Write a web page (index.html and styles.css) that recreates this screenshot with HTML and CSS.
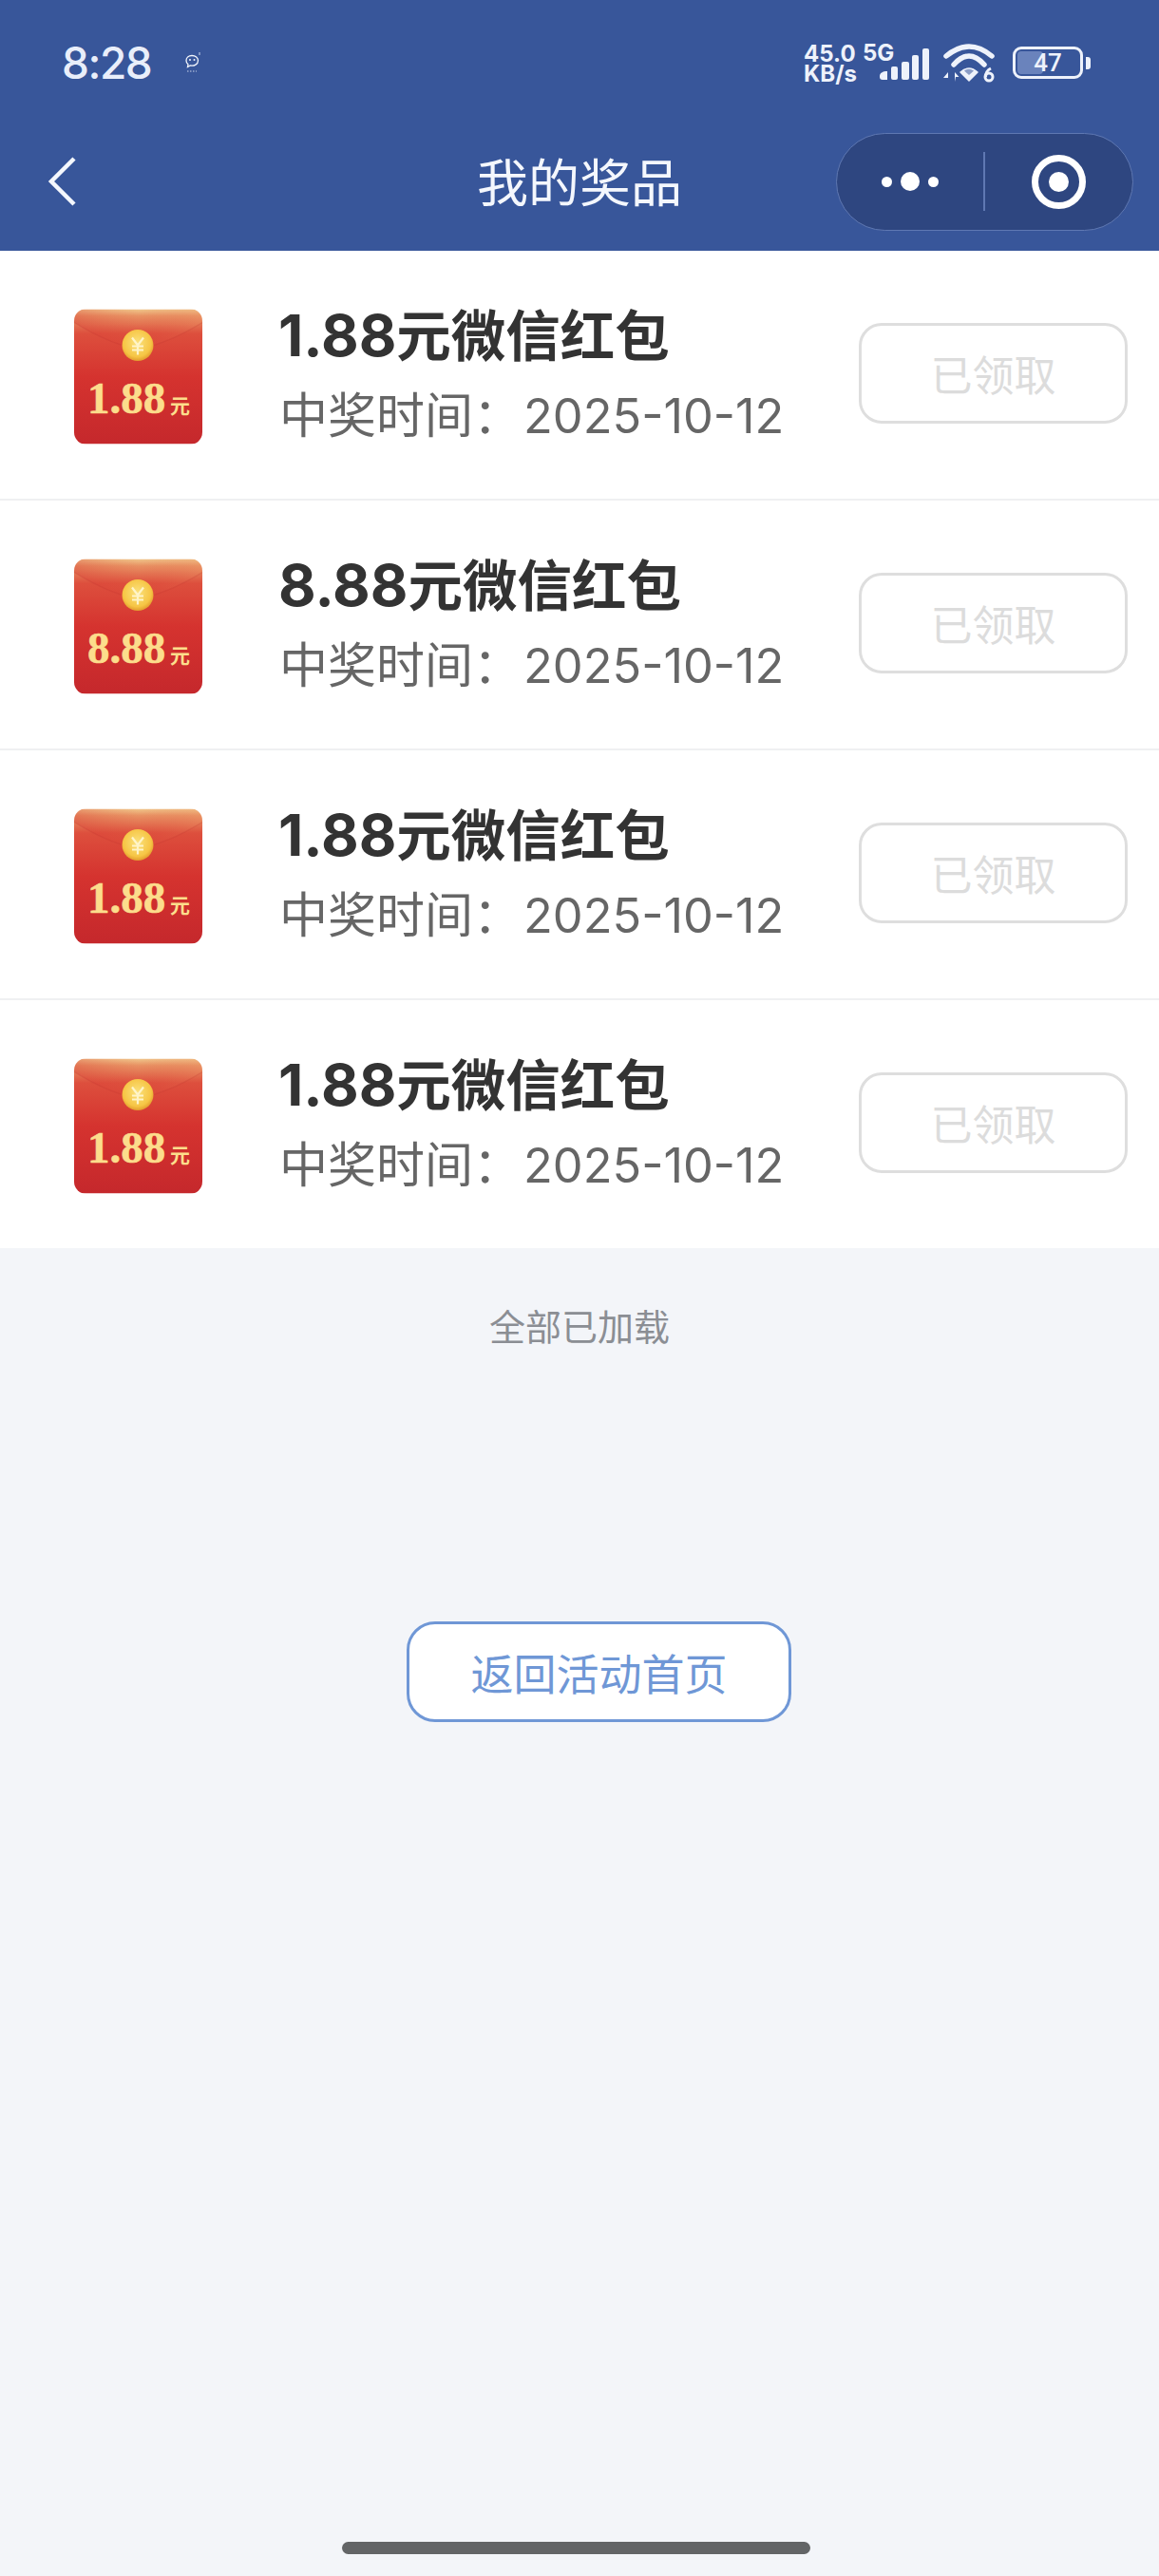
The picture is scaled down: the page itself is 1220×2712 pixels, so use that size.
FILE: index.html
```html
<!DOCTYPE html>
<html lang="zh-CN">
<head>
<meta charset="utf-8">
<title>我的奖品</title>
<link rel="stylesheet" href="styles.css">
</head>
<body>
<svg class="defs" width="0" height="0" aria-hidden="true">
  <defs>
    <linearGradient id="pk" x1="0" y1="0" x2="0" y2="1">
      <stop offset="0" stop-color="#f0c88c"/>
      <stop offset=".05" stop-color="#e89263"/>
      <stop offset=".18" stop-color="#dd4f3d"/>
      <stop offset=".5" stop-color="#d5332f"/>
      <stop offset="1" stop-color="#c5282c"/>
    </linearGradient>
    <linearGradient id="flap" x1="0" y1="0" x2="1" y2="0">
      <stop offset="0" stop-color="#d5312f" stop-opacity=".3"/>
      <stop offset=".5" stop-color="#e0483a" stop-opacity="0"/>
      <stop offset="1" stop-color="#ef9464" stop-opacity=".25"/>
    </linearGradient>
    <radialGradient id="coin" cx=".48" cy=".42" r=".62">
      <stop offset="0" stop-color="#fbe27e"/>
      <stop offset=".72" stop-color="#f6c544"/>
      <stop offset="1" stop-color="#dc8f27"/>
    </radialGradient>
    <symbol id="packet-art" viewBox="0 0 135 142">
      <rect width="135" height="142" fill="url(#pk)"/>
      <path d="M0 0H135V14C112 28 90 38 67 42C45 38 23 28 0 14Z" fill="url(#flap)"/>
      <path d="M0 14C23 28 45 38 67 42C90 38 112 28 135 14" fill="none" stroke="#b92a2a" stroke-opacity=".18" stroke-width="1.200"/>
      <circle cx="67" cy="38" r="16.500" fill="url(#coin)"/>
      <path d="M61 30L67 38L73 30M67 38V48M61 39H73M61 43H73" fill="none" stroke="#fff4c8" stroke-width="2.200"/>
    </symbol>
  </defs>
</svg>

<div class="app">
  <header class="header">
    <div class="status">
      <div class="status-left">
        <span class="clock">8:28</span>
        <svg class="wechat" width="22" height="24" viewBox="0 0 22 24">
          <path d="M9 4.500C5.500 4.500 3 6.800 3 9.800C3 11.500 3.800 12.800 5 13.800L4.500 16.500L7.300 15C11.500 15.800 15.500 13.500 15.500 9.800C15.500 6.800 12.800 4.500 9 4.500Z" fill="none" stroke="#f2f5fc" stroke-width="1.300"/>
          <circle cx="7" cy="9" r="1" fill="#f2f5fc"/><circle cx="11.500" cy="9" r="1" fill="#f2f5fc"/>
          <path d="M17 1V4" stroke="#c9d3ea" stroke-width="1"/>
          <path d="M4 21H14" stroke="#c9d3ea" stroke-width="1.200" stroke-dasharray="1.500 1.500"/>
        </svg>
      </div>
      <div class="status-right">
        <div class="speed">45.0<br>KB/s</div>
        <div class="signal">
          <span class="net">5G</span>
          <svg class="bars" width="52" height="33" viewBox="0 0 52 33">
            <g fill="#eef2fb">
              <path d="M0 29C0 26 3 24 8 24V33H3C1 33 0 32 0 30Z"/>
              <rect x="12" y="19" width="7" height="14" rx="2"/>
              <rect x="23" y="14" width="8" height="19" rx="2"/>
              <rect x="34" y="7" width="7" height="26" rx="2"/>
              <rect x="45" y="0" width="7" height="33" rx="2"/>
            </g>
          </svg>
        </div>
        <svg class="wifi" width="54" height="42" viewBox="0 0 54 42">
          <g fill="none" stroke="#eef2fb" stroke-width="5.500" stroke-linecap="round">
            <path d="M3 14Q27 -6 51 14"/>
            <path d="M11 23Q27 5 43 23"/>
          </g>
          <path d="M27 40L18 31Q27 23 36 31Z" fill="#eef2fb" stroke="#eef2fb" stroke-width="1.500" stroke-linejoin="round"/>
          <path d="M27 34L22 29.500Q27 26 32 29.500Z" fill="#38569a" opacity=".55"/>
          <path d="M5 41V31L0 37H5ZM12 41V31L16.500 36H13" fill="#eef2fb"/>
          <circle cx="48" cy="36" r="4" fill="none" stroke="#eef2fb" stroke-width="3"/>
          <path d="M44.500 36C44.500 31 46 29 50 27" fill="none" stroke="#eef2fb" stroke-width="3"/>
        </svg>
        <div class="battery">
          <div class="battery-body">
            <span class="battery-fill"></span>
            <span class="battery-num">47</span>
          </div>
          <span class="battery-nub"></span>
        </div>
      </div>
    </div>
    <nav class="nav">
      <svg class="back" width="32" height="54" viewBox="0 0 32 54">
        <path d="M28 3L4 27L28 51" fill="none" stroke="#f4f7fd" stroke-width="4.500"/>
      </svg>
      <h1 class="title">我的奖品</h1>
      <div class="capsule">
        <div class="capsule-dots">
          <span class="dot"></span><span class="dot dot-big"></span><span class="dot"></span>
        </div>
        <span class="capsule-sep"></span>
        <div class="capsule-target">
          <span class="target-ring"><span class="target-core"></span></span>
        </div>
      </div>
    </nav>
  </header>

  <main>
    <ul class="list">
      <li class="row">
        <div class="packet">
          <svg class="packet-art" viewBox="0 0 135 142"><use href="#packet-art"/></svg>
          <div class="packet-text"><span class="packet-amount">1.88</span><span class="packet-unit">元</span></div>
        </div>
        <div class="info">
          <div class="name"><span class="num">1.88</span>元微信红包</div>
          <div class="time">中奖时间：<span class="date">2025-10-12</span></div>
        </div>
        <button class="claim">已领取</button>
      </li>
      <li class="row">
        <div class="packet">
          <svg class="packet-art" viewBox="0 0 135 142"><use href="#packet-art"/></svg>
          <div class="packet-text"><span class="packet-amount">8.88</span><span class="packet-unit">元</span></div>
        </div>
        <div class="info">
          <div class="name"><span class="num">8.88</span>元微信红包</div>
          <div class="time">中奖时间：<span class="date">2025-10-12</span></div>
        </div>
        <button class="claim">已领取</button>
      </li>
      <li class="row">
        <div class="packet">
          <svg class="packet-art" viewBox="0 0 135 142"><use href="#packet-art"/></svg>
          <div class="packet-text"><span class="packet-amount">1.88</span><span class="packet-unit">元</span></div>
        </div>
        <div class="info">
          <div class="name"><span class="num">1.88</span>元微信红包</div>
          <div class="time">中奖时间：<span class="date">2025-10-12</span></div>
        </div>
        <button class="claim">已领取</button>
      </li>
      <li class="row row-last">
        <div class="packet">
          <svg class="packet-art" viewBox="0 0 135 142"><use href="#packet-art"/></svg>
          <div class="packet-text"><span class="packet-amount">1.88</span><span class="packet-unit">元</span></div>
        </div>
        <div class="info">
          <div class="name"><span class="num">1.88</span>元微信红包</div>
          <div class="time">中奖时间：<span class="date">2025-10-12</span></div>
        </div>
        <button class="claim">已领取</button>
      </li>
    </ul>
    <p class="loaded">全部已加载</p>
    <div class="home-wrap"><button class="home-btn">返回活动首页</button></div>
  </main>
  <div class="home-indicator"></div>
</div>
</body>
</html>
```

FILE: styles.css
```css
* { box-sizing: border-box; }
html, body { margin: 0; padding: 0; }
body {
  background: #f3f5f9;
  font-family: "Noto Sans CJK SC", "Noto Sans", sans-serif;
}
.defs { position: absolute; }
.app { position: relative; height: 2712px; overflow: hidden; }

.header { height: 264px; background: #38569a; }

.status {
  height: 132px;
  padding: 0 72px 0 65px;
  display: flex;
  justify-content: space-between;
  align-items: center;
  color: #eef2fb;
}
.status-left { display: flex; align-items: center; }
.clock {
  font-family: Inter, sans-serif;
  font-size: 46px;
  font-weight: 500;
  letter-spacing: -1.500px;
  line-height: 1;
  color: #e9eefa;
}
.wechat { margin-left: 34px; }
.status-right { display: flex; align-items: center; }
.speed {
  font-family: Inter, sans-serif;
  font-size: 24px;
  font-weight: 700;
  line-height: 21px;
  margin: 2px 6px 0 0;
}
.signal { position: relative; width: 70px; height: 44px; }
.net {
  position: absolute;
  left: 0;
  top: 0;
  font-family: Inter, sans-serif;
  font-size: 24px;
  font-weight: 700;
  line-height: 24px;
}
.bars { position: absolute; right: 0; bottom: 4px; }
.wifi { margin-left: 15px; }
.battery { display: flex; align-items: center; margin-left: 19px; }
.battery-body {
  position: relative;
  width: 74px;
  height: 34px;
  border: 3px solid #eef2fb;
  border-radius: 9px;
  display: flex;
  align-items: center;
  justify-content: center;
}
.battery-fill {
  position: absolute;
  left: 2px;
  top: 2px;
  bottom: 2px;
  width: 27px;
  background: #6a83bc;
  border-radius: 4px;
}
.battery-num {
  position: relative;
  font-family: Roboto, sans-serif;
  font-size: 26px;
  font-weight: 500;
  line-height: 1;
}
.battery-nub {
  width: 5px;
  height: 13px;
  margin-left: 3px;
  background: #eef2fb;
  border-radius: 0 3px 3px 0;
}

.nav {
  position: relative;
  height: 118px;
  padding: 0 27px 0 50px;
  display: flex;
  align-items: center;
  justify-content: space-between;
}
.title {
  position: absolute;
  left: 0;
  right: 0;
  top: 0;
  height: 116px;
  margin: 0;
  text-align: center;
  font-size: 54px;
  font-weight: 400;
  line-height: 116px;
  color: #f4f7fd;
  pointer-events: none;
}
.capsule {
  width: 313px;
  height: 103px;
  border: 1.500px solid #5f78b2;
  border-radius: 52px;
  background: #2e4680;
  display: flex;
  align-items: center;
}
.capsule-dots {
  width: 154px;
  display: flex;
  align-items: center;
  justify-content: center;
  gap: 9px;
}
.dot { width: 11px; height: 11px; border-radius: 50%; background: #fff; }
.dot-big { width: 20px; height: 20px; }
.capsule-sep { width: 2px; height: 62px; background: #5f78b2; }
.capsule-target {
  flex: 1;
  display: flex;
  justify-content: center;
}
.target-ring {
  width: 57px;
  height: 57px;
  border: 7px solid #fff;
  border-radius: 50%;
  display: flex;
  align-items: center;
  justify-content: center;
}
.target-core { width: 21px; height: 21px; border-radius: 50%; background: #fff; }

.list { margin: 0; padding: 0; list-style: none; background: #fff; }
.row {
  height: 263px;
  padding: 0 33px 0 78px;
  display: flex;
  align-items: center;
  border-bottom: 2px solid #eff0f2;
}
.row-last { height: 261px; border-bottom: 0; }
.packet {
  position: relative;
  width: 135px;
  height: 143px;
  flex: none;
  margin-top: 3px;
  border-radius: 13px;
  overflow: hidden;
}
.packet-art { position: absolute; inset: 0; width: 100%; height: 100%; }
.packet-text {
  position: absolute;
  left: 14px;
  right: 13px;
  bottom: 25px;
  display: flex;
  align-items: baseline;
  justify-content: space-between;
  color: #fcdd8c;
  font-weight: 700;
}
.packet-amount {
  font-family: "Liberation Serif", serif;
  font-size: 47px;
  line-height: 1;
  -webkit-text-stroke: 0.6px #fcdd8c;
}
.packet-unit { font-size: 21px; line-height: 1; }

.info { flex: 1; margin-left: 80px; padding-bottom: 1px; min-width: 0; }
.name {
  font-size: 57.500px;
  font-weight: 700;
  line-height: 68px;
  color: #333;
  white-space: nowrap;
}
.num { font-family: Inter, sans-serif; font-size: 61px; }
.time {
  margin-top: 13px;
  padding-left: 1px;
  font-size: 51px;
  line-height: 68px;
  color: #666;
  white-space: nowrap;
}
.date { font-family: Inter, sans-serif; font-size: 50.500px; margin-left: 2px; }
.claim {
  width: 283px;
  height: 106px;
  flex: none;
  margin-bottom: 3px;
  border: 3px solid #dedede;
  border-radius: 24px;
  background: #fff;
  font-family: inherit;
  font-size: 44px;
  color: #dcdcdc;
  padding: 0;
}

.loaded {
  margin: 51px 0 0;
  text-align: center;
  font-size: 38px;
  line-height: 60px;
  color: #8b8e94;
}
.home-wrap {
  margin-top: 282px;
  padding-left: 428px;
}
.home-btn {
  width: 405px;
  height: 106px;
  border: 3px solid #6f97d6;
  border-radius: 30px;
  background: #fff;
  font-family: inherit;
  font-size: 45px;
  color: #6f97d6;
  padding: 0;
}
.home-indicator {
  position: absolute;
  left: 360px;
  top: 2676px;
  width: 493px;
  height: 13px;
  border-radius: 7px;
  background: #636567;
}
```
